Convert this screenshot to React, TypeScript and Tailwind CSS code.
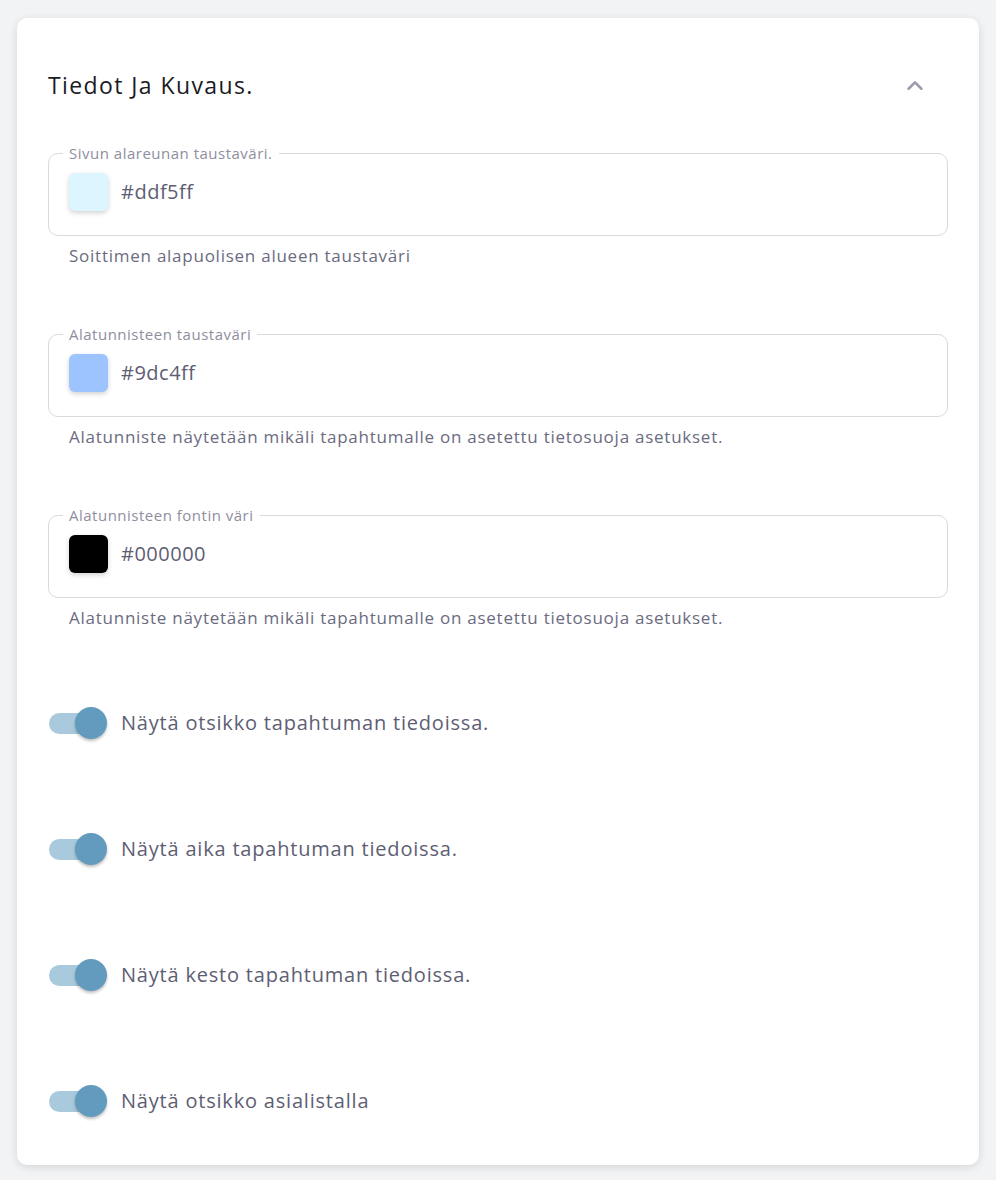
import React from "react";

const fields = [
  {
    label: "Sivun alareunan taustaväri.",
    color: "#ddf5ff",
    help: "Soittimen alapuolisen alueen taustaväri",
  },
  {
    label: "Alatunnisteen taustaväri",
    color: "#9dc4ff",
    help: "Alatunniste näytetään mikäli tapahtumalle on asetettu tietosuoja asetukset.",
  },
  {
    label: "Alatunnisteen fontin väri",
    color: "#000000",
    help: "Alatunniste näytetään mikäli tapahtumalle on asetettu tietosuoja asetukset.",
  },
];

const toggles = [
  "Näytä otsikko tapahtuman tiedoissa.",
  "Näytä aika tapahtuman tiedoissa.",
  "Näytä kesto tapahtuman tiedoissa.",
  "Näytä otsikko asialistalla",
];

const ColorField = ({ label, color, help }: { label: string; color: string; help: string }) => (
  <div className="mb-[58px]">
    <fieldset className="rounded-[10px] border border-[#d9d9df] px-5 pb-[24px] pt-[12px]">
      <legend className="-ml-1.5 px-1.5 text-[15px] leading-4 tracking-[0.5px] text-[#8e8e9e]">{label}</legend>
      <div className="flex h-[38px] items-center gap-[13px]">
        <span
          className="h-[38px] w-[39px] rounded-[6px] shadow-[0_2px_5px_rgba(0,0,0,0.18)]"
          style={{ backgroundColor: color }}
        />
        <span className="text-[20px] tracking-[0.5px] text-[#5e5e73]">{color}</span>
      </div>
    </fieldset>
    <p className="mt-2 pl-[21px] text-[17px] leading-6 tracking-[0.75px] text-[#6b6b80]">{help}</p>
  </div>
);

const Toggle = ({ label }: { label: string }) => (
  <div className="flex h-8 items-center gap-[14px]">
    <div className="flex w-[59px] items-center pl-[1px]">
      <span className="h-[21px] w-[51px] rounded-full bg-[#a9c9dc]" />
      <span className="-ml-[25px] h-[32px] w-[32px] rounded-full bg-[#639bbf] shadow-[0_2px_3px_rgba(0,0,0,0.25)]" />
    </div>
    <span className="text-[20px] tracking-[0.8px] text-[#5e5e73]">{label}</span>
  </div>
);

export default function App() {
  return (
    <div className="min-h-[1180px] bg-[#f2f3f5] px-[17px] pt-[18px] font-['Open_Sans',sans-serif]">
      <div className="rounded-[10px] bg-white px-[31px] pb-[48px] pt-[50px] shadow-[0_2px_8px_rgba(0,0,0,0.12)]">
        <div className="mb-[43px] flex h-[34px] items-center justify-between">
          <h2 className="text-[23px] tracking-[1.4px] text-[#1b1b1f]">Tiedot Ja Kuvaus.</h2>
          <svg width="22" height="22" viewBox="0 0 24 24" className="mr-[22px] mt-[2px] text-[#9b9bab]" fill="none" stroke="currentColor" strokeWidth="2.8" strokeLinecap="round" strokeLinejoin="round">
            <path d="M5 15l7-7 7 7" />
          </svg>
        </div>
        {fields.map((f) => (
          <ColorField key={f.label} {...f} />
        ))}
        <div className="flex flex-col gap-[94px] pt-[19px]">
          {toggles.map((t) => (
            <Toggle key={t} label={t} />
          ))}
        </div>
      </div>
    </div>
  );
}
